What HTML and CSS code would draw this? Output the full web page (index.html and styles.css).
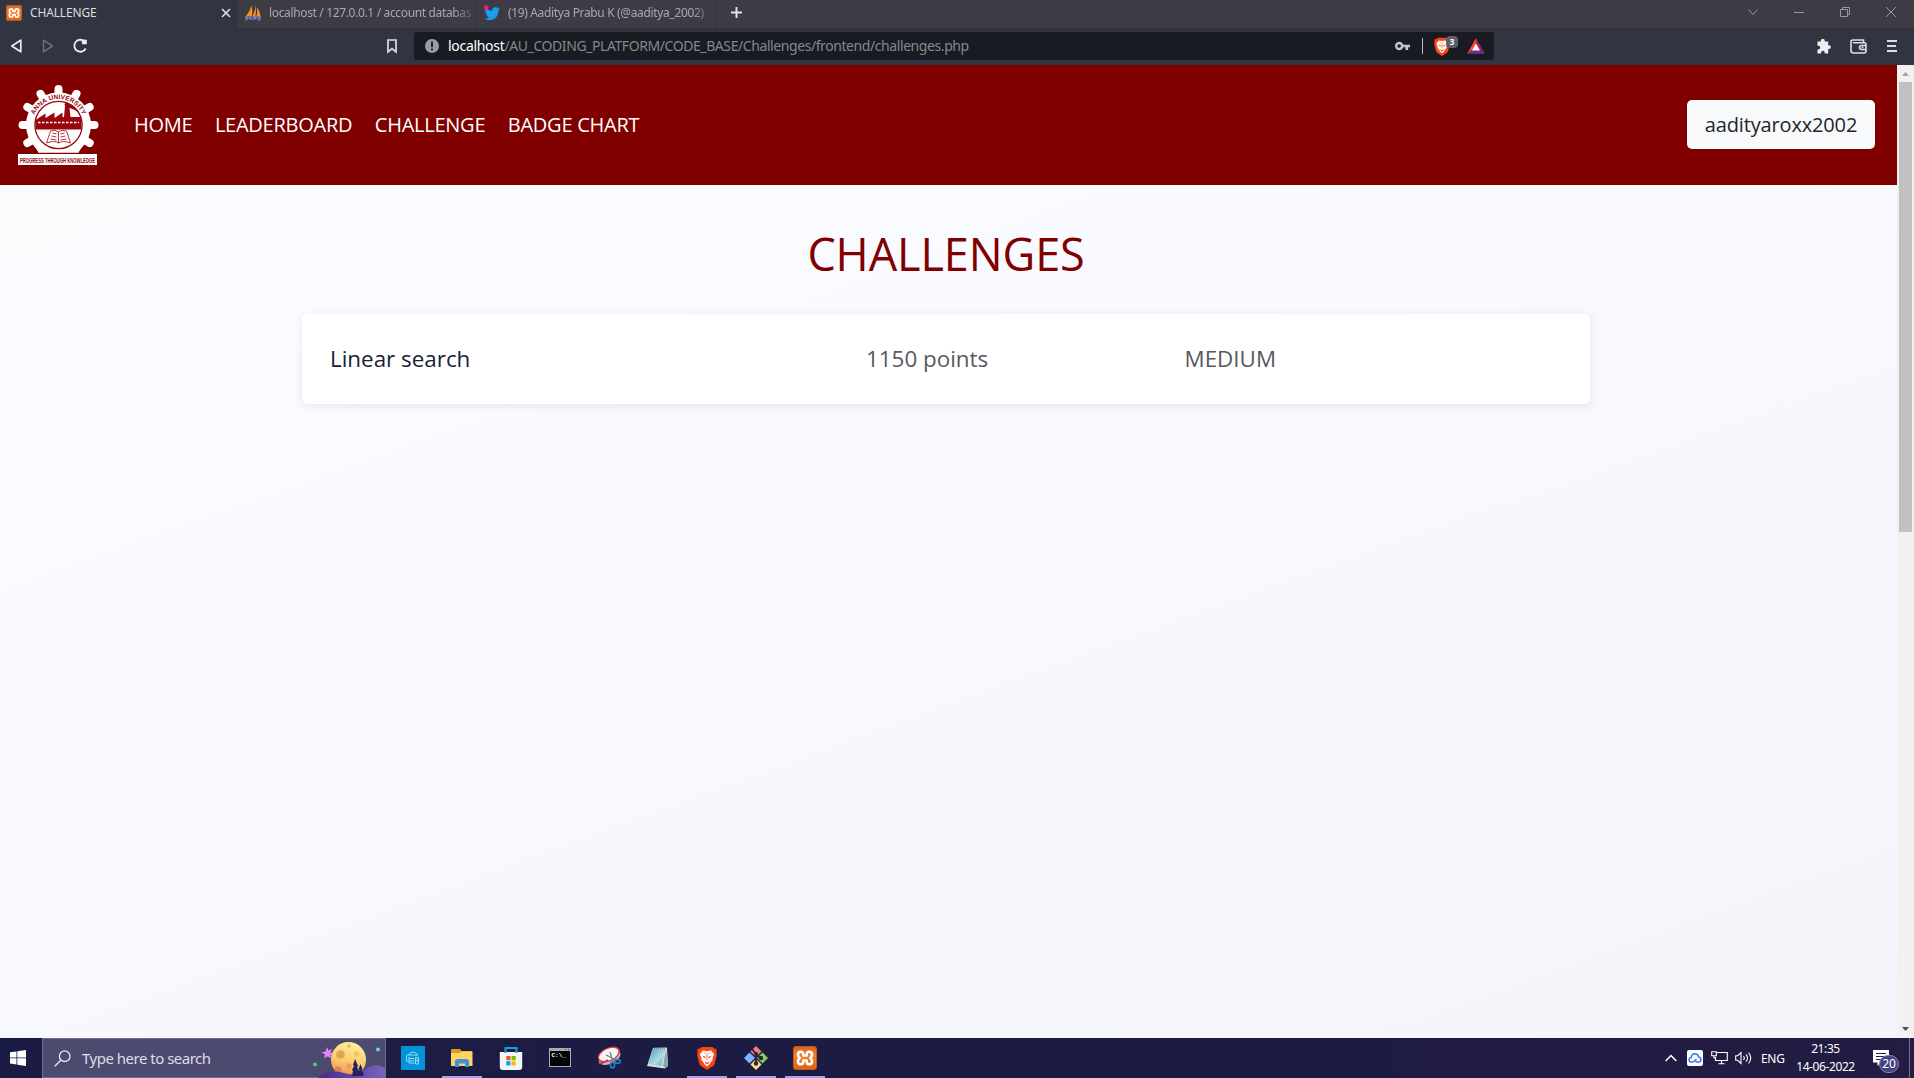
FILE: index.html
```html
<!DOCTYPE html>
<html lang="en">
<head>
<meta charset="utf-8">
<title>CHALLENGE</title>
<link rel="stylesheet" href="styles.css">
</head>
<body>
<svg width="0" height="0" class="defs">
  <defs>
    <linearGradient id="orange" x1="0" y1="0" x2="0" y2="1"><stop offset="0" stop-color="#d9611b"/><stop offset=".4" stop-color="#f58233"/><stop offset="1" stop-color="#dc6418"/></linearGradient>
    <linearGradient id="moon" x1="0.6" y1="0" x2=".35" y2="1"><stop offset="0" stop-color="#fff09a"/><stop offset=".55" stop-color="#fbcb6d"/><stop offset="1" stop-color="#f08a50"/></linearGradient>
    <linearGradient id="hill" x1="0" y1="0" x2="1" y2="0"><stop offset="0" stop-color="#452a86"/><stop offset="1" stop-color="#7763bd"/></linearGradient>
    <linearGradient id="glass" x1="0" y1="0" x2="1" y2="1"><stop offset="0" stop-color="#4f97a8"/><stop offset=".6" stop-color="#a9dce6"/><stop offset="1" stop-color="#5fa5b8"/></linearGradient>
    <symbol id="xampp" viewBox="0 0 24 24">
      <rect x=".5" y=".5" width="23" height="23" rx="2.5" fill="url(#orange)" stroke="#c9590f"/>
      <path d="M7.800 5.700Q10.200 5.700 10.200 8V9.600H13.800V8Q13.800 5.700 16.200 5.700Q19 5.700 19 8.600Q19 10.800 17.200 12Q19 13.200 19 15.400Q19 18.300 16.200 18.300Q13.800 18.300 13.800 16V14.400H10.200V16Q10.200 18.300 7.800 18.300Q5 18.300 5 15.400Q5 13.200 6.800 12Q5 10.800 5 8.600Q5 5.700 7.800 5.700z" fill="none" stroke="#fff" stroke-width="2.500" stroke-linejoin="round"/>
    </symbol>
    <symbol id="lion" viewBox="0 0 20 24">
      <path d="M4.500 1h11l1.500 1.800 2-.2.800 3.400-.4 1.500.4 2-2.300 8.500q-.4 1.300-1.500 2L10 24l-6-4q-1.100-.7-1.500-2L.2 9.500l.4-2L.2 6 1 2.600l2 .2z" fill="#fb4513"/>
      <path d="M6 4.500l4 .7 4-.7 3.200 3.800-1.700 3.600.2 1.900-2.300 2.700-.6 1.600L10 20.500l-2.800-2.400-.6-1.600-2.300-2.700.2-1.900-1.700-3.600z" fill="#fff"/>
      <path d="M5 9.500l3.700 1.200-.6 1.700zM15 9.500l-3.700 1.200.6 1.700zM7.500 15.200L10 16.700l2.500-1.500-1 2.200L10 18.500l-1.500-1.100zM9.600 8h.8v5.500L10 15l-.4-1.500zM6.500 6.500l2.500.8-.5.700zM13.500 6.500l-2.500.8.5.7z" fill="#fb4513"/>
    </symbol>
  </defs>
</svg>
<div class="screen">

  <div class="tabstrip">
    <div class="tab tab-active">
      <svg class="fav" viewBox="0 0 24 24"><use href="#xampp"/></svg>
      <span class="tab-title t1">CHALLENGE</span>
      <svg class="tab-close" viewBox="0 0 10 10"><path d="M1 1l8 8M9 1L1 9" stroke="#dcdde0" stroke-width="1.700"/></svg>
    </div>
    <div class="tab">
      <svg class="fav" viewBox="0 0 16 16"><path d="M6.200.5q2 4.500.600 10.500H.8q4-4 5.400-10.500zM10.500 0q1 5.500 0 11h-3q3-5 3-11zM12 2q3 4 3.500 9h-4q1.200-4 .5-9z" fill="#f39321"/><path d="M0 11.800h16M1 12v4M1 12.600h2v1.500H1M5 12v3M5 13.500h1.800V15M9 12h2v1.500H9V12v3.500M13 12v3h2v-3z" fill="none" stroke="#8888bd" stroke-width="1"/></svg>
      <span class="tab-title t2">localhost / 127.0.0.1 / account databas</span>
    </div>
    <div class="tab">
      <svg class="fav" viewBox="0 0 16 16"><path d="M16 3.500l-1.700.5q1-.7 1.300-1.500l-1.900.7A3.300 3.300 0 0 0 8 5.900Q4.200 5.800 1.500 2.800C.6 4.400 1 6 2.400 7L1 6.700q.1 2.400 2.600 3.200l-1.400.1q.7 1.800 3 2.200Q3 14 0 13.700 3.500 15.600 7 15q7-1 7.500-9.500z" fill="#1d9bf0"/><circle cx="2.200" cy="2.600" r="2.300" fill="#f5187f"/></svg>
      <span class="tab-title t3">(19) Aaditya Prabu K (@aaditya_2002)</span>
    </div>
    <div class="newtab"><svg width="13" height="13" viewBox="0 0 13 13"><path d="M6.500 1v11M1 6.500h11" stroke="#e4e4e6" stroke-width="1.900"/></svg></div>
    <div class="winctl">
      <svg viewBox="0 0 12 12"><path d="M1.500 3.500l4.500 5 4.500-5"/></svg>
      <svg viewBox="0 0 12 12"><path d="M1 6.500h10"/></svg>
      <svg viewBox="0 0 12 12"><path d="M1.500 3.500h7v7h-7zM3.500 3.500v-2h7v7h-2"/></svg>
      <svg viewBox="0 0 12 12"><path d="M1 1l10 10M11 1L1 11"/></svg>
    </div>
  </div>

  <div class="toolbar">
    <div class="navbtns">
      <svg width="14" height="16" viewBox="0 0 14 16"><path d="M10.800 2.200v11.600L1.800 8z" fill="none" stroke="#eeeeef" stroke-width="1.700" stroke-linejoin="round"/></svg>
      <svg width="14" height="16" viewBox="0 0 14 16"><path d="M2.500 2.200v11.600L11.500 8z" fill="none" stroke="#6c6e79" stroke-width="1.500" stroke-linejoin="round"/></svg>
      <svg width="16" height="16" viewBox="0 0 16 16"><path d="M12.500 3.400A6 6 0 1 0 13.700 10.500" fill="none" stroke="#eeeeef" stroke-width="1.800"/><path d="M9.600 2.800Q13 .5 14.800 2v4.300h-4.600z" fill="#eeeeef"/></svg>
    </div>
    <svg class="bookmark" viewBox="0 0 12 16"><path d="M2 2h8v12l-4-3.300L2 14z" fill="none" stroke="#dedfe3" stroke-width="1.700"/></svg>
    <div class="address">
      <svg width="14" height="14" viewBox="0 0 14 14"><circle cx="7" cy="7" r="7" fill="#9a9ca4"/><path d="M7 2.500v5.800M7 9.500v2" stroke="#191b22" stroke-width="1.900"/></svg>
      <span class="url"><b>localhost</b>/AU_CODING_PLATFORM/CODE_BASE/Challenges/frontend/challenges.php</span>
      <svg class="key" viewBox="0 0 15 10"><circle cx="4.200" cy="5" r="3" fill="none" stroke="#c5c6ca" stroke-width="2.400"/><path d="M7 5h8M11.800 5v4" stroke="#c5c6ca" stroke-width="2.700"/></svg>
      <i class="divider"></i>
      <span class="shield"><svg width="16" height="19" viewBox="0 0 20 24"><use href="#lion"/></svg><em>3</em></span>
      <svg class="bat" viewBox="0 0 18 16"><path d="M9 0L0 16l9-6z" fill="#ff4724"/><path d="M9 0l9 16-9-6z" fill="#9e1f63"/><path d="M0 16h18l-5-4H5z" fill="#662d91"/><path d="M9 5.500l4 7H5z" fill="#fff"/></svg>
    </div>
    <div class="tools">
      <svg width="16" height="16" viewBox="0 0 16 16"><path d="M1.500 3.500h3.300V2.800a2 2 0 0 1 4 0v.7h3.400v3.700h.8a1.900 1.900 0 0 1 0 3.800h-.8v4.500H8.700v-1a1.800 1.800 0 0 0-3.600 0v1H1.500v-4h.8a1.900 1.900 0 0 0 0-3.800h-.8z" fill="#eeeeef"/></svg>
      <svg width="17" height="15" viewBox="0 0 17 15"><path d="M13.500 3V1H3Q1 1 1 3v8.500q0 2.500 2.500 2.500H14q2 0 2-2V5.500Q16 3.700 14 3.700H3M16 6.500h-4.200q-2.300 0-2.300 2t2.300 2H16" fill="none" stroke="#dedfe3" stroke-width="1.600"/><circle cx="12.500" cy="8.500" r="1" fill="#dedfe3"/></svg>
      <svg width="10" height="14" viewBox="0 0 10 14"><path d="M0 2h10M0 7h9M0 12h10" stroke="#dedfe3" stroke-width="1.800"/></svg>
    </div>
  </div>

  <div class="viewport">
    <div class="page">
      <header class="site-header">
        <svg class="crest" viewBox="0 0 84 84">
          <g transform="translate(42.500 43)">
            <g fill="#fff">
              <g id="pair"><rect x="-4" y="-40" width="8" height="80" rx="4"/></g>
              <use href="#pair" transform="rotate(30)"/><use href="#pair" transform="rotate(60)"/><use href="#pair" transform="rotate(90)"/><use href="#pair" transform="rotate(120)"/><use href="#pair" transform="rotate(150)"/>
            </g>
            <circle r="32.500" fill="#fff"/>
            <path d="M-30 27.500h60V42h-60z" fill="#800000"/>
            <path d="M-24 21h48l-4 6.500h-40z" fill="#fff"/>
            <circle r="23.600" fill="#fff" stroke="#98060e" stroke-width="1.300"/>
            <path d="M-23 4.400V-5L-13-11.500V-7L-4-12.500V-7L4-12.500V-8H5.500L6.500-19Q5-21.500 8-22.500 18-19 21.500-11 17-15.500 11-17L12-8H22.300L23 4.400z" fill="#98060e"/>
            <path d="M-20.500-2.500h41" stroke="#fff" stroke-width="1.700" stroke-dasharray="2.500 1.500"/>
            <path d="M-8 6Q-3 4 0 7 3 4 8 6L12 18Q4 15 0 18-4 15-12 18zM0 7v11M-6 8l4 1M-7 11l5 1M-8 14l6 1M6 8L2 9M7 11l-5 1M8 14l-6 1" fill="none" stroke="#98060e" stroke-width=".8"/>
          </g>
          <path id="arc" d="M16.500 43A26 26 0 0 1 68.500 43" fill="none"/>
          <text class="crest-arc"><textPath href="#arc" startOffset="50%" text-anchor="middle">ANNA UNIVERSITY</textPath></text>
          <rect x="2" y="72" width="79" height="11" fill="#fff"/>
          <text class="crest-motto" x="4" y="80.500" textLength="75" lengthAdjust="spacingAndGlyphs">PROGRESS THROUGH KNOWLEDGE</text>
        </svg>
        <nav class="menu"><a>HOME</a><a>LEADERBOARD</a><a>CHALLENGE</a><a>BADGE CHART</a></nav>
        <div class="user">aadityaroxx2002</div>
      </header>
      <main class="content">
        <h1>CHALLENGES</h1>
        <div class="card"><span class="name">Linear search</span><span>1150 points</span><span>MEDIUM</span></div>
      </main>
    </div>
    <div class="scrollbar">
      <svg width="17" height="17" viewBox="0 0 17 17"><path d="M5 11h7L8.500 7z" fill="#a3a3a3"/></svg>
      <div class="thumb"></div>
      <svg class="down" width="17" height="17" viewBox="0 0 17 17"><path d="M5 6h7L8.500 10z" fill="#505050"/></svg>
    </div>
  </div>

  <div class="taskbar">
    <div class="start"><svg width="16" height="16" viewBox="0 0 16 16"><path d="M0 2.300L6.500 1.400v6.100H0zM7.300 1.300L16 0v7.500H7.300zM0 8.300h6.500v6.200L0 13.600zM7.300 8.300H16V16l-8.700-1.300z" fill="#fff"/></svg></div>
    <div class="search">
      <svg width="17" height="17" viewBox="0 0 17 17"><circle cx="10.700" cy="6.200" r="5.300" fill="none" stroke="#e8e8ee" stroke-width="1.300"/><path d="M6.800 10.200L.7 16.300" stroke="#e8e8ee" stroke-width="1.300"/></svg>
      <span>Type here to search</span>
      <svg class="moon" width="76" height="39" viewBox="0 0 76 39">
        <path d="M18 8l1.500 3.500L23 10l-1.500 3.500L25 15l-3.500 1 .5 3-3.500-1.500L15 19l1-3.500-3.500-2 4-1z" fill="#e881f7"/>
        <circle cx="39.500" cy="20.500" r="17.500" fill="url(#moon)"/>
        <circle cx="31.500" cy="15.500" r="4.300" fill="#dda64f"/><circle cx="47.500" cy="15" r="2.800" fill="#eec46b"/><circle cx="40" cy="7" r="2" fill="#edc565"/><circle cx="40" cy="27" r="2.700" fill="#ed9b58"/><circle cx="29" cy="31" r="3.500" fill="#de7e59"/>
        <path d="M9 39q10-10 26-5 11 3 18-1Q65 22 76 29v10z" fill="url(#hill)"/>
        <path d="M46 20l3 7-1 1 2 4-1 1 1 4h-7l1-5-1-1 2-4-1-1zM51.500 25l2 5-1 1 2 3v3h-6v-3l2-3-1-1z" fill="#292061"/>
        <circle cx="6" cy="25.500" r="2" fill="#4bcf78"/><circle cx="69" cy="10.500" r="2" fill="#68d3e8"/>
      </svg>
    </div>
    <div class="apps">
      <div><svg viewBox="0 0 24 24"><path fill="#0095d9" d="M0 0h24v24H0z"/><path d="M8 9l1-2q3-2 6 0l1 2M7 15H5.500v-5q0-1 1-1H17M8 12.500h5M8 11v6h5.500M8 14.800h5M14.500 11.500h3v6.500h-3zM16 13v3" fill="none" stroke="#99d9f4" stroke-width="1"/></svg></div>
      <div class="on"><svg viewBox="0 0 24 24"><path d="M1 4q0-1 1-1h8l1.500 2H22v5H1z" fill="#e19d0b"/><path d="M1 7h8.500l2-1.500H22.500V20H1z" fill="#ffd467"/><path d="M5 21v-6.500L7 13h10l2 1.500V21h-4v-3.500H9V21z" fill="#3e95d9"/></svg></div>
      <div><svg viewBox="0 0 24 24"><path d="M.8 6h22.400v15q0 3-3 3H3.800q-3 0-3-3z" fill="#f4f5f7"/><path d="M6.500 7V2h11v5" fill="none" stroke="#169fe6" stroke-width="2"/><path d="M7.300 10H11.500v4.200H7.300z" fill="#f35325"/><path d="M12.500 10h4.200v4.200h-4.200z" fill="#81bc06"/><path d="M7.300 15.200h4.200v4.200H7.300z" fill="#05a6f0"/><path d="M12.500 15.200h4.200v4.200h-4.200z" fill="#ffba08"/></svg></div>
      <div><svg viewBox="0 0 24 24"><path d="M1 2h22v19H1z" fill="#aaaab1"/><path d="M2 5h20v15H2z" fill="#050505"/><path d="M17 3.500h1M20 3.500h1" stroke="#444"/><text class="prompt" x="3.500" y="11">C:\_</text></svg></div>
      <div><svg viewBox="0 0 24 24"><g transform="rotate(-24 12 10)"><ellipse cx="12" cy="11.500" rx="11.500" ry="6.500" fill="#b9bec7"/><ellipse cx="12.500" cy="8.500" rx="11" ry="6.200" fill="#f5f5f7" stroke="#d73743" stroke-width="1.300"/></g><path d="M2 17q4 1 9-3" stroke="#d73743" stroke-width="2" fill="none"/><path d="M13 6l3 10M9 9l10 5" stroke="#7c8189" stroke-width="1.300"/><ellipse cx="15.500" cy="19" rx="2" ry="3" fill="none" stroke="#2782bf" stroke-width="1.700"/><ellipse cx="20.500" cy="15.500" rx="3" ry="1.800" fill="none" stroke="#2782bf" stroke-width="1.700"/></svg></div>
      <div><svg viewBox="0 0 24 24"><path d="M7 2l14-.5L22 20l-3 2.500L1 20z" fill="#d9e2df"/><path d="M7.500 2.500l12-.5L15.500 20 2 18z" fill="url(#glass)"/><path d="M20 3l2 17-3 2-2-2z" fill="#8da3a4"/><path d="M8 2h12" stroke="#778" stroke-width="1.500" stroke-dasharray="1 1"/></svg></div>
      <div class="on"><svg viewBox="0 0 20 24"><use href="#lion"/></svg></div>
      <div class="on"><svg viewBox="0 0 24 24"><path d="M12 0l5.500 5.500L12 11 6.500 5.500z" fill="#f47c85"/><path d="M5.500 6.500L11 12l-5.500 5.500L0 12z" fill="#80b3ff"/><path d="M18.500 6.500L24 12l-5.500 5.500L13 12z" fill="#80d35f"/><path d="M12 13l5.500 5.500L12 24l-5.500-5.500z" fill="#ffe18a"/><path d="M8 3l4 5v9M12 8l4.500 4.500" stroke="#2a2832" stroke-width="1.900" fill="none"/><circle cx="12" cy="8" r="2" fill="#2a2832"/><circle cx="12" cy="17.500" r="2.200" fill="#2a2832"/><circle cx="17" cy="12" r="2.200" fill="#2a2832"/></svg></div>
      <div class="on"><svg viewBox="0 0 24 24"><use href="#xampp"/></svg></div>
    </div>
    <div class="tray">
      <svg class="caret" viewBox="0 0 12 8"><path d="M.7 7L6 1.500 11.300 7" fill="none" stroke="#fff" stroke-width="1.500"/></svg>
      <svg class="cloud" viewBox="0 0 16 16"><rect width="16" height="16" rx="2" fill="#fff"/><path d="M9.500 9L6.500 11.800Q2 12.700 2 10q0-2 2.200-2.400Q4.500 4 8 3.800q3 0 3.700 3.200Q14.200 7.500 14 10q-.3 2.200-3 2.200Q9.500 12.200 8 10.500" fill="none" stroke="#327cf0" stroke-width="1.500"/></svg>
      <svg class="net" viewBox="0 0 17 14"><path d="M5.500 1.500h10.800v8H4.500V6M10.500 9.500V13M7.500 12.800h6M.7.700h4.600v4H.7zM3 4.700v2.300h1.500" fill="none" stroke="#fff" stroke-width="1.100"/></svg>
      <svg class="vol" viewBox="0 0 17 14"><path d="M.7 4.700h2L6 1.500v11L2.700 9.300h-2zM8.500 5q1.600 2 0 4M11 3.300q3 3.700 0 7.400M13.500 1.500q4.500 5.500 0 11" fill="none" stroke="#fff" stroke-width="1.100"/></svg>
      <span class="lang">ENG</span>
      <div class="clock"><span>21:35</span><span>14-06-2022</span></div>
      <div class="notes"><svg width="16" height="16" viewBox="0 0 16 16"><path d="M0 0h16v12.500H8L4.500 16v-3.500H0z" fill="#fff"/><path d="M3 3.500h10M3 6.500h10M3 9.500h6" stroke="#241d42" stroke-width="1.200"/></svg><span class="count">20</span></div>
      <i class="peek"></i>
    </div>
  </div>
</div>
</body>
</html>
```
FILE: styles.css
```css
* { box-sizing: border-box; }
body { margin: 0; overflow: hidden; font-family: "Open Sans", "Noto Sans", sans-serif; }
svg { display: block; flex: none; }
.defs { position: absolute; }
.screen { width: 1914px; height: 1078px; display: flex; flex-direction: column; overflow: hidden; }

.tabstrip { height: 28px; flex: none; display: flex; background: #3d3c44; font-family: "Noto Sans", sans-serif; font-size: 12px; color: #a8a8ad; }
.tab { width: 239px; height: 28px; padding: 0 2px 3px 7px; display: flex; align-items: center; gap: 8px; border-right: 1px solid #323138; white-space: nowrap; }
.tab-active { width: 238px; padding: 0 6px 3px; background: #313441; color: #dddde0; border: 0; }
.fav { width: 16px; height: 16px; }
.tab-title { flex: 1; }
.t1 { letter-spacing: -.15px; }
.t2, .t3 { letter-spacing: -.35px; -webkit-mask-image: linear-gradient(90deg, #000 90%, transparent 102%); }
.tab-close { width: 10px; height: 10px; margin-right: 1px; }
.newtab { width: 40px; padding: 6px 0 0 14px; }
.winctl { margin-left: auto; padding: 6px 17px 0 0; display: flex; gap: 34px; }
.winctl svg { width: 12px; height: 12px; fill: none; stroke: #98989d; stroke-width: 1; }

.toolbar { height: 37px; flex: none; display: flex; align-items: center; padding: 0 17px 1px 10px; background: #313441; }
.navbtns { display: flex; gap: 17px; }
.bookmark { width: 12px; height: 16px; margin-left: 298px; }
.address { width: 1080px; height: 28px; margin-left: 16px; padding: 0 9px 0 11px; display: flex; align-items: center; border-radius: 3px; background: #191b22; }
.url { margin: 0 0 1px 9px; font-family: "Noto Sans", sans-serif; font-size: 14px; letter-spacing: -.42px; color: #85878d; }
.url b { font-weight: 400; color: #fff; letter-spacing: -.3px; }
.key { width: 15px; height: 10px; margin-left: auto; }
.divider { width: 1px; height: 16px; margin-left: 12px; background: #b9babf; }
.shield { position: relative; margin-left: 11px; width: 25px; }
.shield em { position: absolute; left: 12px; top: -1px; width: 12px; height: 12px; border-radius: 4px; background: #5d606b; color: #fff; font: 700 8px/12px "Noto Sans", sans-serif; text-align: center; }
.bat { width: 18px; height: 16px; margin-left: 8px; }
.tools { margin-left: auto; display: flex; align-items: center; gap: 18px; }
.tools svg:last-child { margin-left: 2px; }

.viewport { flex: 1; min-height: 0; display: flex; }
.page { flex: 1; background: linear-gradient(160deg, #fdfdff 0%, #f9faff 35%, #f4f5fa 100%); }
.site-header { height: 120px; padding: 0 22px 2px 16px; display: flex; align-items: center; background: #800000; color: #fff; }
.crest { width: 84px; height: 84px; }
.crest-arc { font: 700 6.500px "Liberation Sans", sans-serif; letter-spacing: .1px; fill: #98060e; }
.crest-motto { font: 700 7px "Liberation Sans", sans-serif; fill: #98060e; }
.menu { display: flex; gap: 22.500px; margin-left: 34px; font-size: 20px; letter-spacing: -.25px; }
.user { width: 188px; height: 49px; margin-left: auto; border-radius: 5px; background: #f8f9fa; color: #212529; font-size: 20px; letter-spacing: -.15px; line-height: 49px; text-align: center; }
.content { display: flex; flex-direction: column; padding: 38px 307px 0 302px; }
h1 { margin: 0 0 30px; color: #800000; font-size: 45px; letter-spacing: -.1px; line-height: 61px; font-weight: 400; text-align: center; }
.card { height: 90px; padding: 0 28px 2px; display: grid; grid-template-columns: 536px 318.500px 1fr; align-items: center; border-radius: 5px; background: #fff; box-shadow: 0 2px 8px rgba(60, 65, 120, .11); font-size: 22.4px; color: #58595f; }
.card .name { color: #182236; }
.scrollbar { width: 17px; display: flex; flex-direction: column; align-items: center; background: #f1f1f1; }
.thumb { width: 13px; height: 450px; background: #c1c1c1; }
.down { margin-top: auto; }

.taskbar { height: 40px; flex: none; display: flex; background: linear-gradient(90deg, #1b1c44, #1d1b43 65%, #241c42); color: #fff; font-family: "Noto Sans", sans-serif; }
.start { width: 42px; padding: 12px 0 0 10px; }
.search { width: 344px; display: flex; align-items: center; padding-left: 11px; border: 1px solid #6e6d91; background: #4c4a6e; }
.search span { margin-left: 11px; font-size: 15px; letter-spacing: -.5px; color: #dedde8; }
.moon { margin-left: auto; }
.apps { display: flex; margin-left: 2px; }
.apps div { width: 40px; height: 40px; margin: 0 4.500px; display: flex; align-items: center; justify-content: center; }
.apps svg { width: 24px; height: 24px; }
.apps .on { border-bottom: 2px solid #aba0ee; padding-top: 2px; }
.prompt { font: 700 6px "Liberation Mono", monospace; fill: #fff; }
.tray { margin-left: auto; display: flex; align-items: center; }
.caret { width: 12px; height: 8px; }
.cloud { width: 16px; height: 16px; margin-left: 10px; }
.net { width: 17px; height: 14px; margin-left: 8px; }
.vol { width: 17px; height: 14px; margin-left: 7px; }
.lang { width: 26px; margin-left: 9px; font-size: 12px; letter-spacing: -.3px; }
.clock { width: 76px; padding-left: 1px; display: flex; flex-direction: column; font-size: 12px; line-height: 18px; letter-spacing: -.4px; text-align: center; }
.notes { position: relative; width: 36px; margin-left: 10px; }
.count { position: absolute; left: 6px; top: 5px; width: 20px; height: 18px; border: 1px solid #8985b9; border-radius: 9px; background: #454283; font-size: 12px; line-height: 15px; text-align: center; }
.peek { width: 1px; height: 40px; margin-right: 4px; background: #77738f; }
```
